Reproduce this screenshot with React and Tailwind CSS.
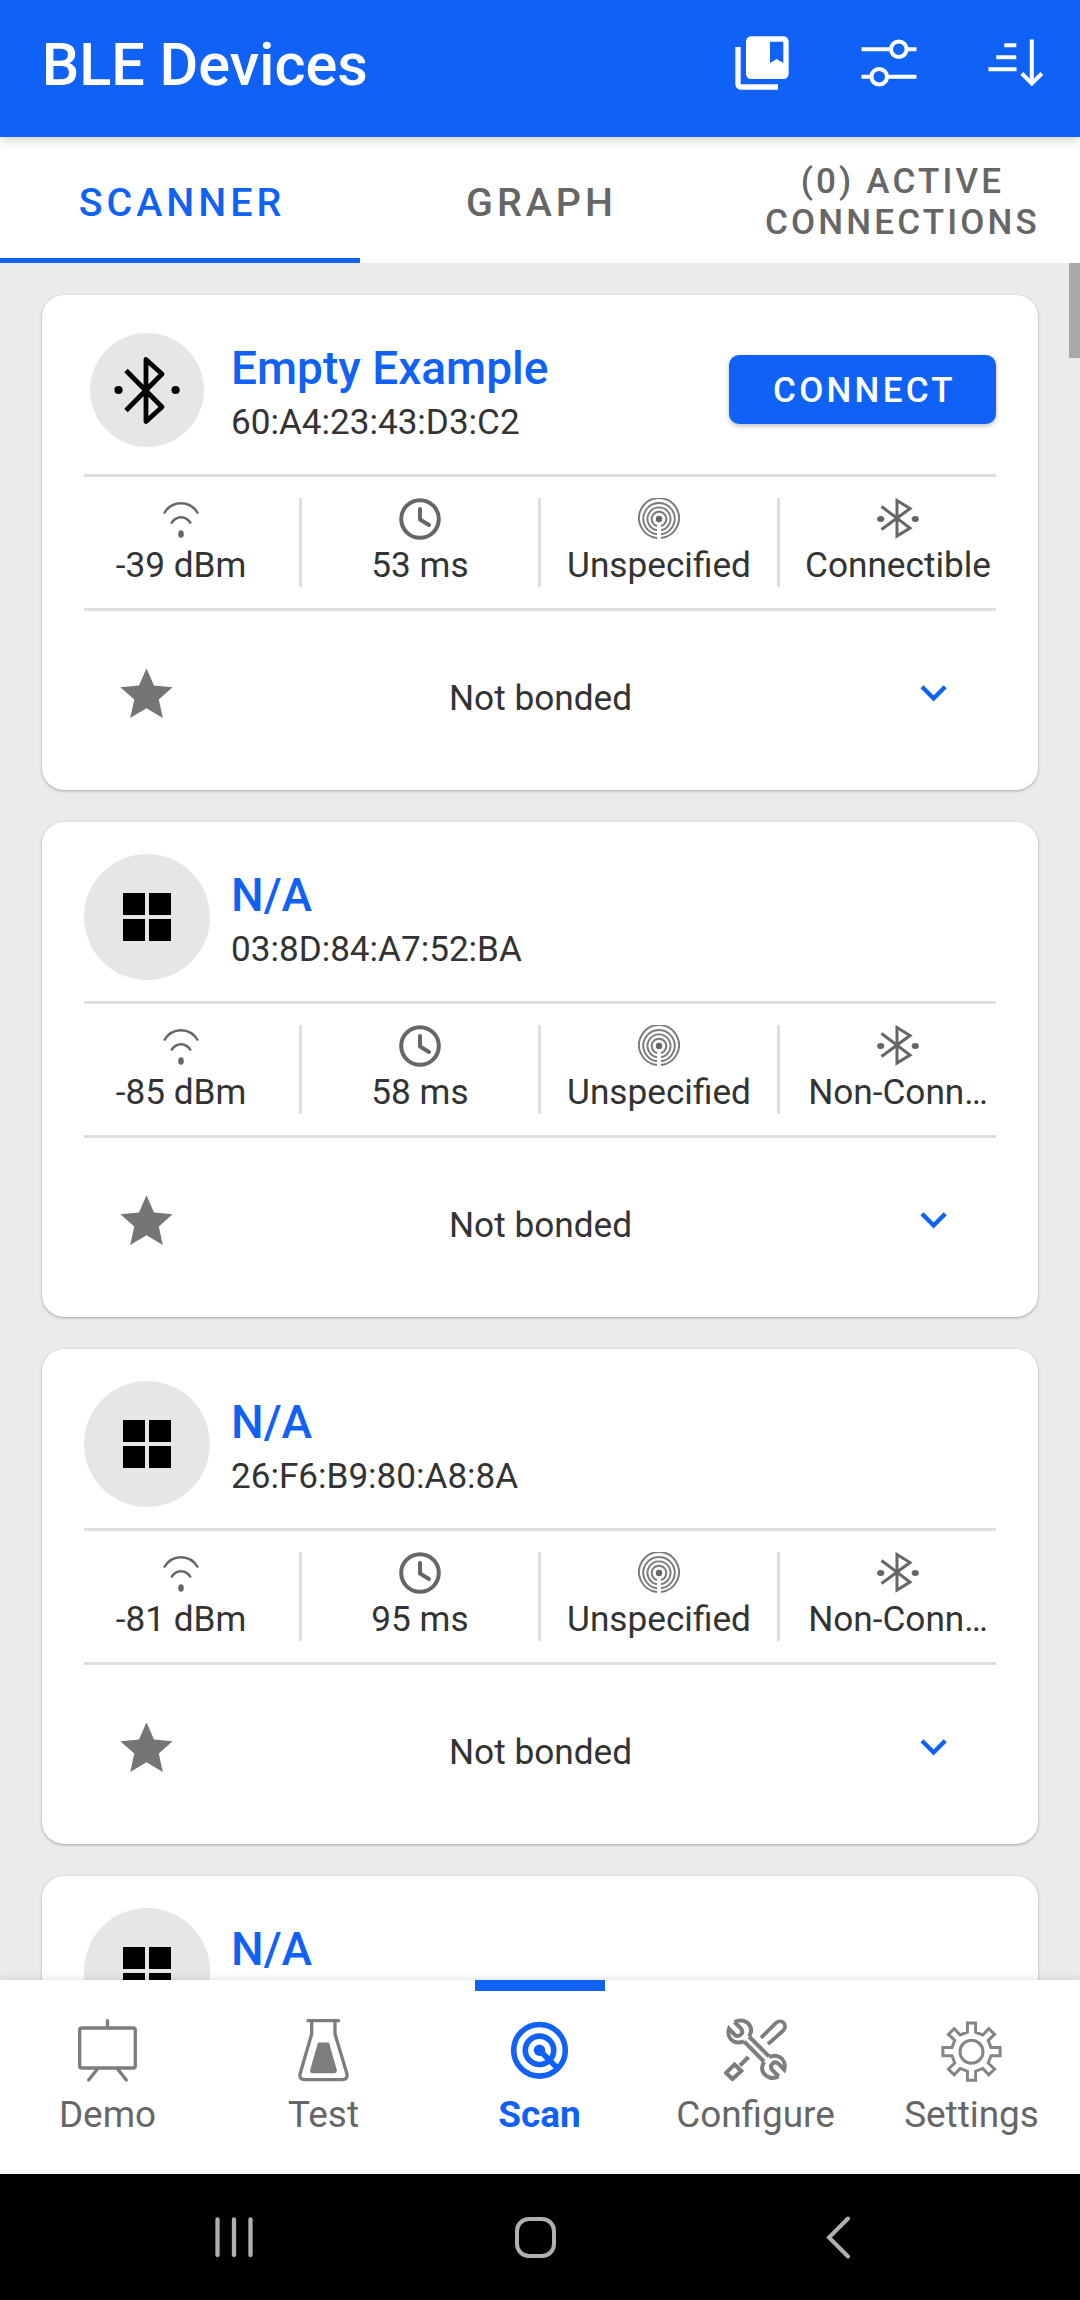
import React from "react";

const devices = [
  { name: "Empty Example", address: "60:A4:23:43:D3:C2", rssi: "-39 dBm", interval: "53 ms", kind: "Unspecified", mode: "Connectible", connectable: true },
  { name: "N/A", address: "03:8D:84:A7:52:BA", rssi: "-85 dBm", interval: "58 ms", kind: "Unspecified", mode: "Non-Conn…" },
  { name: "N/A", address: "26:F6:B9:80:A8:8A", rssi: "-81 dBm", interval: "95 ms", kind: "Unspecified", mode: "Non-Conn…" },
  { name: "N/A" },
];

/* Toolbar icons */

function CollectionsIcon() {
  return (
    <svg className="h-16 w-16" viewBox="0 0 24 24" fill="#fff">
      <path d="M4 6H2v14c0 1.1.9 2 2 2h14v-2H4V6z" />
      <path d="M20 2H8c-1.1 0-2 .9-2 2v12c0 1.1.9 2 2 2h12c1.1 0 2-.9 2-2V4c0-1.1-.9-2-2-2zm0 10l-2.500-1.500L15 12V4h5v8z" />
    </svg>
  );
}

function FilterIcon() {
  return (
    <svg className="h-16 w-16" viewBox="857.5 30.5 64 64" fill="none" stroke="#fff" strokeWidth="4">
      <path d="M862 48.7h28M908 48.7h9M862 76.2h9M888 76.2h29" />
      <circle cx="899.3" cy="48.7" r="7.8" />
      <circle cx="879.7" cy="76.2" r="7.8" />
    </svg>
  );
}

function SortIcon() {
  return (
    <svg className="h-16 w-16" viewBox="984.5 30.5 64 64" fill="none" stroke="#fff" strokeWidth="4">
      <path d="M1004.8 44.7h12M996.8 56.7h20M989 68.7h28M1032.3 39v44" />
      <path d="M1022.3 73l10 10 10-10" />
    </svg>
  );
}

/* Card icons */

function BluetoothAvatar() {
  return (
    <div className="flex h-[114px] w-[114px] items-center justify-center rounded-full bg-[#e6e6e6]">
      <svg className="h-20 w-20" viewBox="107 350 80 80" fill="none" stroke="#000" strokeWidth="4.8" strokeLinejoin="round">
        <path d="M126 370.5L162 407L146 421.5V359.5L162 374L126 410.5" />
        <circle cx="118.5" cy="390" r="4.1" fill="#000" stroke="none" />
        <circle cx="175.6" cy="390" r="4.1" fill="#000" stroke="none" />
      </svg>
    </div>
  );
}

function WindowsAvatar() {
  return (
    <div className="flex h-[126px] w-[126px] items-center justify-center rounded-full bg-[#e6e6e6]">
      <div className="grid grid-cols-2 gap-1">
        <div className="h-[22px] w-[22px] bg-black" />
        <div className="h-[22px] w-[22px] bg-black" />
        <div className="h-[22px] w-[22px] bg-black" />
        <div className="h-[22px] w-[22px] bg-black" />
      </div>
    </div>
  );
}

function SignalIcon() {
  return (
    <svg className="h-[42px] w-[42px]" viewBox="0 0 42 42" fill="none" stroke="#666" strokeWidth="2.4">
      <path d="M4 15.5C8 8.5 14 5.2 21 5.2S34 8.5 38 15.5" />
      <path d="M11.2 25.5C13.5 21.5 17 19.3 21 19.3S28.5 21.5 30.8 25.5" />
      <ellipse cx="21" cy="36" rx="2.8" ry="3.8" fill="#666" stroke="none" />
    </svg>
  );
}

function ClockIcon() {
  return (
    <svg className="h-[42px] w-[42px]" viewBox="0 0 42 42" fill="none" stroke="#666" strokeWidth="4">
      <circle cx="21" cy="21" r="18.8" />
      <path d="M21 11V21.5L30 27" strokeLinecap="round" strokeLinejoin="round" />
    </svg>
  );
}

function BeaconIcon() {
  return (
    <svg className="h-[42px] w-[42px]" viewBox="0 0 42 42" fill="none" stroke="#7a7a7a" strokeWidth="1.9">
      <path d="M19 40A20 20 0 1 1 23 40" />
      <path d="M19 36.2A15.7 15.7 0 1 1 23 36.2" />
      <path d="M19 32.2A11.5 11.5 0 1 1 23 32.2" />
      <path d="M19 28A7.3 7.3 0 1 1 23 28" />
      <circle cx="21" cy="21" r="3.2" fill="#666" stroke="none" />
    </svg>
  );
}

function BluetoothIcon() {
  return (
    <svg className="h-[42px] w-[42px]" viewBox="0 0 42 42" fill="none" stroke="#666" strokeWidth="3">
      <path d="M4.5 8.5L33 30L20 38V2.5L33 10.5L4.5 31.5" />
      <ellipse cx="3.7" cy="21" rx="3.6" ry="3" fill="#666" stroke="none" />
      <ellipse cx="38.3" cy="21" rx="3.6" ry="3" fill="#666" stroke="none" />
    </svg>
  );
}

function StarIcon() {
  return (
    <svg className="h-14 w-14" viewBox="119 669 56 56" fill="#757575">
      <path d="M146.5 668.3L154 685.5L172.5 687.3L158.8 699.5L162.8 718L146.500 708.2L130.2 718L134.3 699.5L120.3 687.3L139 685.5Z" />
    </svg>
  );
}

function ChevronIcon() {
  return (
    <svg className="h-10 w-10" viewBox="913 677 40 40" fill="none" stroke="#1062f6" strokeWidth="4.4">
      <path d="M922 686.8L933.6 698.5L945.2 686.8" />
    </svg>
  );
}

/* Bottom navigation icons */

function DemoIcon() {
  return (
    <svg className="h-16 w-16" viewBox="76 2018 64 64" fill="none" stroke="#7d7d7d" strokeWidth="3.3" strokeLinecap="round">
      <rect x="79.7" y="2028" width="55.6" height="40" rx="2" />
      <path d="M107.5 2020.7V2027M97 2069.5L88.7 2080M118 2069.5L126.3 2080" />
    </svg>
  );
}

function TestIcon() {
  return (
    <svg className="h-16 w-16" viewBox="292 2018 64 64" fill="none" stroke="#7d7d7d" strokeWidth="3.3" strokeLinecap="round" strokeLinejoin="round">
      <path d="M308 2020.7H338.6" />
      <path d="M311.7 2022V2034L300.3 2073Q298.5 2079.7 305 2079.7H342Q348.5 2079.7 346.7 2073L335 2034V2022" />
      <path d="M318 2042.5H329L336.8 2070Q337 2073.3 334 2073.3H312.8Q309.5 2073.3 310.2 2070Z" fill="#7d7d7d" stroke="none" />
    </svg>
  );
}

function ScanIcon() {
  return (
    <svg className="h-16 w-16" viewBox="508 2018 64 64" fill="none" stroke="#1062f6" strokeWidth="5.6">
      <circle cx="539.5" cy="2050.3" r="25.8" />
      <circle cx="539.5" cy="2050.3" r="14.2" />
      <circle cx="539.5" cy="2050.3" r="5.7" fill="#1062f6" stroke="none" />
      <path d="M539.5 2050.3L557.5 2068.3" />
    </svg>
  );
}

function ConfigureIcon() {
  return (
    <svg className="h-16 w-16" viewBox="724 2018 64 64" fill="none" stroke="#7d7d7d" strokeWidth="4">
      <path d="M749 2036.5L769 2056.3M744 2041.3L764 2061.5" />
      <path d="M734.5 2022C741 2018.8 747.5 2021 750 2026C751.8 2029.5 751 2033.5 749 2036.5" />
      <path d="M734.5 2022L740.8 2028.3C743 2031 742.5 2033.3 740.5 2035C738 2036.8 736 2036 734.5 2034.5L729 2028.8C727.5 2033.5 729 2038.5 733 2041C736.5 2043 740.5 2043 744 2041.3" />
      <g transform="rotate(180 756.600 2049.2)">
        <path d="M734.5 2022C741 2018.8 747.5 2021 750 2026C751.8 2029.5 751 2033.5 749 2036.5" />
        <path d="M734.5 2022L740.8 2028.3C743 2031 742.5 2033.3 740.5 2035C738 2036.8 736 2036 734.5 2034.5L729 2028.8C727.5 2033.5 729 2038.5 733 2041C736.5 2043 740.5 2043 744 2041.3" />
      </g>
      <path d="M761 2037.8L775.5 2023.3C781 2018 788.5 2024.5 783.3 2030.5L768 2044.2" strokeWidth="3.8" />
      <path d="M748.5 2057L740 2065.5" />
      <path d="M734.5 2064.5L741.3 2071L732.5 2079L726 2072.800Z" />
    </svg>
  );
}

function SettingsIcon() {
  return (
    <svg className="h-16 w-16" viewBox="-31.5 -33.7 64 64" fill="none" stroke="#858585" strokeWidth="3">
      <path d="M-4.1 -19.5L-4.1 -28.6L4.1 -28.6L4.1 -19.5L11.3 -16.7L17.3 -23.1L23.1 -17.3L16.7 -11.3L19.5 -4.1L28.6 -4.1L28.6 4.1L19.5 4.1L16.7 11.3L23.1 17.3L17.3 23.1L11.3 16.7L4.1 19.5L4.1 28.6L-4.1 28.6L-4.1 19.5L-11.3 16.7L-17.3 23.1L-23.1 17.3L-16.7 11.3L-19.5 4.1L-28.6 4.1L-28.6 -4.1L-19.5 -4.1L-16.7 -11.3L-23.1 -17.3L-17.3 -23.1L-11.3 -16.7Z" />
      <circle r="11.5" />
    </svg>
  );
}

function Metric({ icon, label, last }) {
  return (
    <>
      <div className="flex h-[89px] w-[236px] flex-col items-center">
        {icon}
        <div className="mt-0.5 h-[45px] text-[35.2px] leading-[47px] whitespace-nowrap text-[#333]">{label}</div>
      </div>
      {!last && <div className="h-[89px] w-[3px] shrink-0 bg-[#dedede]" />}
    </>
  );
}

function DeviceCard({ device }) {
  return (
    <article className="h-[495px] shrink-0 rounded-[22px] bg-white px-[42px] shadow-[0_1px_3px_rgba(0,0,0,0.3)]">
      <div className="flex h-[179px] items-start">
        <div className="mt-8 flex h-[126px] w-[126px] items-center justify-center">
          {device.connectable ? <BluetoothAvatar /> : <WindowsAvatar />}
        </div>
        <div className="mt-[46px] ml-[21px] flex-1">
          <h2 className="text-[46px] leading-[54px] font-medium text-[#1062f6]">{device.name}</h2>
          {device.address && <p className="text-[35.1px] leading-[54px] text-[#333]">{device.address}</p>}
        </div>
        {device.connectable && (
          <button className="mt-[60px] h-[69px] w-[267px] rounded-[10px] bg-[#1062f6] pt-0.5 pl-1 text-[35px] leading-[67px] font-medium tracking-[3.25px] text-white shadow-[0_2px_5px_rgba(0,0,0,0.25)]">
            CONNECT
          </button>
        )}
      </div>
      {device.address && (
        <>
          <div className="h-[3px] bg-[#dedede]" />
          <div className="-mr-5 -ml-[21px] flex h-[131px] items-center">
            <Metric icon={<SignalIcon />} label={device.rssi} />
            <Metric icon={<ClockIcon />} label={device.interval} />
            <Metric icon={<BeaconIcon />} label={device.kind} />
            <Metric icon={<BluetoothIcon />} label={device.mode} last />
          </div>
          <div className="h-[3px] bg-[#dedede]" />
          <div className="flex h-[172px] items-center">
            <div className="flex w-[126px] justify-center"><StarIcon /></div>
            <div className="flex-1 pt-0.5 pl-px text-center text-[35.2px] text-[#333]">Not bonded</div>
            <div className="flex w-[126px] justify-center"><ChevronIcon /></div>
          </div>
        </>
      )}
    </article>
  );
}

function NavItem({ icon, label, active }) {
  return (
    <div className="relative flex w-[216px] flex-col items-center pt-[38px]">
      {active && <div className="absolute top-0 h-[10.5px] w-[130px] bg-[#1062f6]" />}
      {icon}
      <div className={active ? "pr-px text-[37px] leading-[66px] font-bold text-[#1062f6]" : "pr-px text-[36.9px] leading-[66px] text-[#666]"}>{label}</div>
    </div>
  );
}

export default function App() {
  return (
    <div className="flex h-[2300px] w-[1080px] flex-col overflow-hidden bg-[#ebebeb] font-[Roboto,sans-serif]">
      <header className="relative z-20 flex h-[137px] shrink-0 items-start justify-between bg-[#1062f6] pl-[41.7px] shadow-[0_2px_12px_rgba(0,0,0,0.22)]">
        <h1 className="text-[59.4px] leading-[131px] font-medium text-white">BLE Devices</h1>
        <div className="flex gap-[63px] pt-[30.5px] pr-[32px]">
          <CollectionsIcon />
          <FilterIcon />
          <SortIcon />
        </div>
      </header>

      <nav className="relative z-10 grid h-[126px] shrink-0 grid-cols-3 grid-rows-[126px] bg-white text-center font-medium text-[#666]">
        <div className="h-[126px] border-b-[5px] border-[#1062f6] pl-1 text-[39.4px] leading-[131px] tracking-[4px] text-[#1062f6]">SCANNER</div>
        <div className="h-[126px] pl-[3px] text-[39.4px] leading-[131px] tracking-[4px]">GRAPH</div>
        <div className="pt-6 pl-[5px] text-[35px] leading-[41px] tracking-[3.15px]">
          (0) ACTIVE
          <br />
          CONNECTIONS
        </div>
      </nav>

      <main className="relative h-[1717px] shrink-0 overflow-hidden">
        <div className="flex flex-col gap-8 px-[42px] pt-8">
          {devices.map((device, i) => (
            <DeviceCard key={i} device={device} />
          ))}
        </div>
        <div className="absolute top-0 right-0 h-[95px] w-[11px] bg-[#a8a8a8]" />
      </main>

      <nav className="relative z-10 flex h-[194px] shrink-0 bg-white shadow-[0_-1px_8px_rgba(0,0,0,0.12)]">
        <NavItem icon={<DemoIcon />} label="Demo" />
        <NavItem icon={<TestIcon />} label="Test" />
        <NavItem icon={<ScanIcon />} label="Scan" active />
        <NavItem icon={<ConfigureIcon />} label="Configure" />
        <NavItem icon={<SettingsIcon />} label="Settings" />
      </nav>

      <footer className="relative z-20 grid h-[126px] shrink-0 grid-cols-[302px_302px_302px] items-center justify-items-center bg-black pl-[83px]">
        <svg className="h-12 w-12" viewBox="0 0 48 48" stroke="#b0b0b0" strokeWidth="4.3" strokeLinecap="round">
          <path d="M7.5 6.5V42M24 6.5V42M40.5 6.5V42" />
        </svg>
        <svg className="h-12 w-12" viewBox="0 0 48 48" fill="none" stroke="#b0b0b0" strokeWidth="4">
          <rect x="5" y="6" width="37" height="37" rx="12" />
        </svg>
        <svg className="h-12 w-12" viewBox="0 0 48 48" fill="none" stroke="#b0b0b0" strokeWidth="4" strokeLinecap="round">
          <path d="M34 5.5L15 24.5L34 43.5" />
        </svg>
      </footer>
    </div>
  );
}
